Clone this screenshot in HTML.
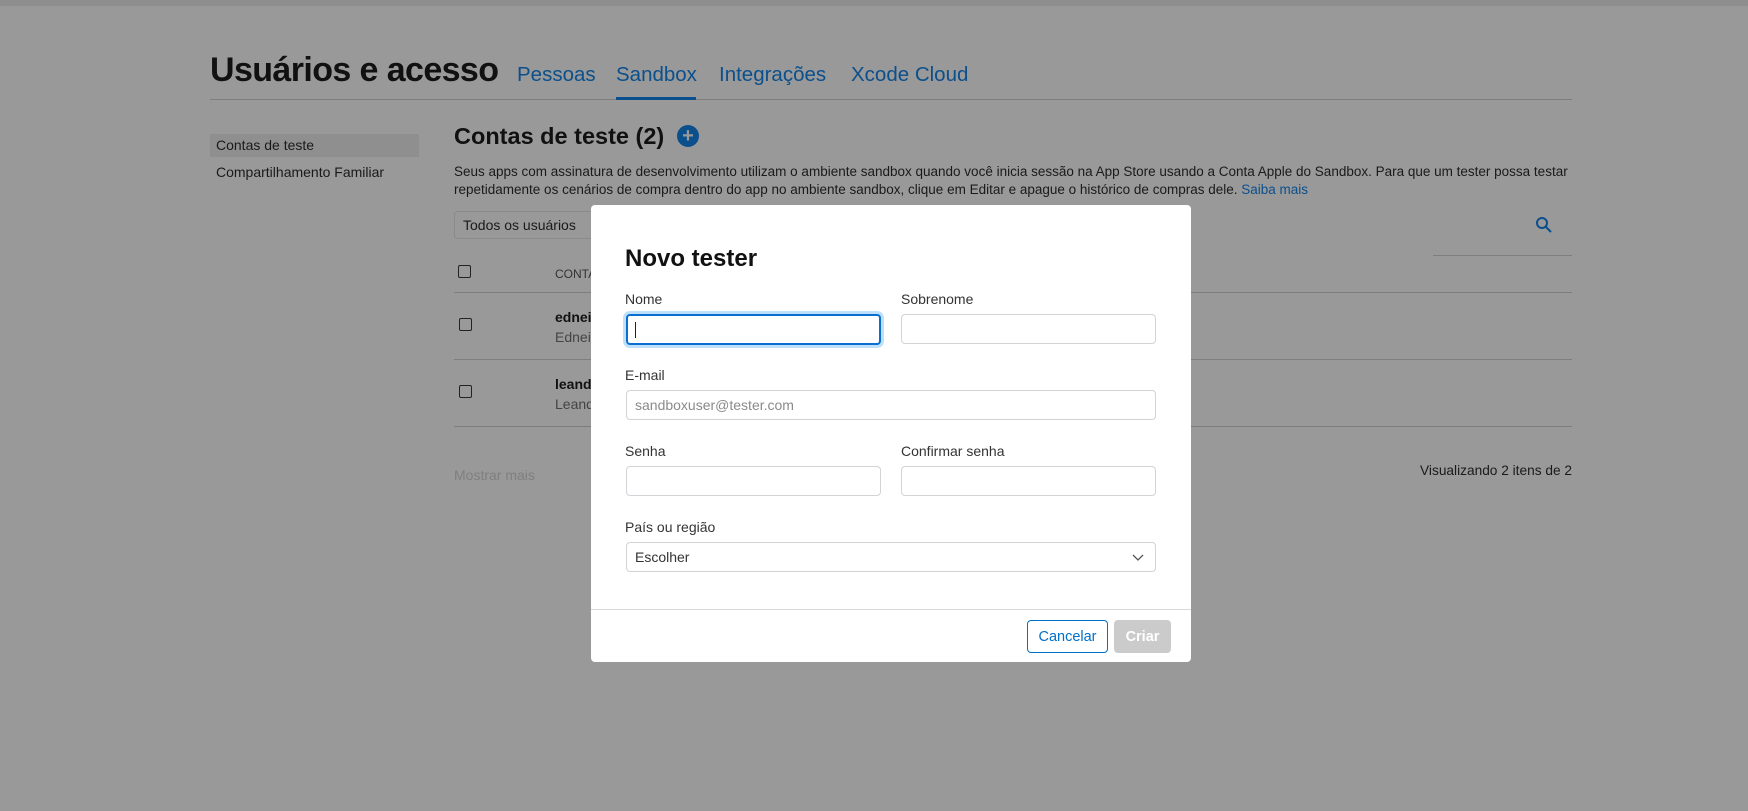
<!DOCTYPE html>
<html><head><meta charset="utf-8"><style>
*{margin:0;padding:0;box-sizing:border-box}
body{width:1748px;height:811px;background:#999;font-family:"Liberation Sans",sans-serif;position:relative;overflow:hidden;color:#111}
.a{position:absolute;white-space:nowrap}
.blue{color:#0b4f8c}
.lbl{font-size:14px;color:#333}
.inp{position:absolute;background:#fff;border:1px solid #d2d2d7;border-radius:4px}
</style></head><body>
<div class="a" style="left:0;top:0;width:1748px;height:6px;background:#8e8e8e"></div>
<div class="a" style="left:210px;top:51px;font-size:34px;font-weight:bold;letter-spacing:-0.6px">Usuários e acesso</div>
<div class="a blue" style="left:517px;top:63px;font-size:20.5px">Pessoas</div>
<div class="a blue" style="left:616px;top:63px;font-size:20.5px">Sandbox</div>
<div class="a blue" style="left:719px;top:63px;font-size:20.5px">Integrações</div>
<div class="a blue" style="left:851px;top:63px;font-size:20.5px">Xcode Cloud</div>
<div class="a" style="left:210px;top:99px;width:1362px;height:1px;background:#7e7e7e"></div>
<div class="a" style="left:616px;top:97px;width:80px;height:3px;background:#0b4f8c"></div>

<div class="a" style="left:210px;top:134px;width:209px;height:23px;background:#8f8f8f"></div>
<div class="a" style="left:216px;top:137px;font-size:14px;color:#1a1a1a">Contas de teste</div>
<div class="a" style="left:216px;top:164px;font-size:14px;color:#1a1a1a">Compartilhamento Familiar</div>

<div class="a" style="left:454px;top:123px;font-size:23.5px;font-weight:bold">Contas de teste (2)</div>
<div class="a" style="left:677px;top:125px;width:22px;height:22px;border-radius:50%;background:#0b4f8c;color:#999;font-size:20px;font-weight:bold;line-height:22px;text-align:center">+</div>
<div class="a" style="left:454px;top:163px;font-size:13.5px;line-height:18px;color:#1a1a1a">Seus apps com assinatura de desenvolvimento utilizam o ambiente sandbox quando você inicia sessão na App Store usando a Conta Apple do Sandbox. Para que um tester possa testar<br>repetidamente os cenários de compra dentro do app no ambiente sandbox, clique em Editar e apague o histórico de compras dele. <span class="blue">Saiba mais</span></div>
<div class="a" style="left:454px;top:211px;width:150px;height:28px;border:1px solid #8a8a8a;border-radius:4px"></div>
<div class="a" style="left:463px;top:217px;font-size:14px;color:#1a1a1a">Todos os usuários</div>
<svg class="a" style="left:1535px;top:216px" width="18" height="18" viewBox="0 0 18 18"><circle cx="7" cy="7" r="5" fill="none" stroke="#0b4f8c" stroke-width="2"/><path d="M11 11l5 5" stroke="#0b4f8c" stroke-width="2"/></svg>
<div class="a" style="left:1433px;top:255px;width:139px;height:1px;background:#7e7e7e"></div>
<div class="a" style="left:458px;top:265px;width:13px;height:13px;border:1px solid #222;border-radius:2px"></div>
<div class="a" style="left:555px;top:267px;font-size:12px;color:#333">CONTA</div>
<div class="a" style="left:454px;top:292px;width:1118px;height:1px;background:#7e7e7e"></div>
<div class="a" style="left:459px;top:318px;width:13px;height:13px;border:1px solid #222;border-radius:2px"></div>
<div class="a" style="left:555px;top:309px;font-size:14px;font-weight:bold">ednei</div>
<div class="a" style="left:555px;top:329px;font-size:14px;color:#444">Ednei</div>
<div class="a" style="left:454px;top:359px;width:1118px;height:1px;background:#7e7e7e"></div>
<div class="a" style="left:459px;top:385px;width:13px;height:13px;border:1px solid #222;border-radius:2px"></div>
<div class="a" style="left:555px;top:376px;font-size:14px;font-weight:bold">leandro</div>
<div class="a" style="left:555px;top:396px;font-size:14px;color:#444">Leandro</div>
<div class="a" style="left:454px;top:426px;width:1118px;height:1px;background:#7e7e7e"></div>
<div class="a" style="left:454px;top:467px;font-size:14px;color:#7f7f7f">Mostrar mais</div>
<div class="a" style="left:1420px;top:463px;width:152px;text-align:right;font-size:13.7px;color:#1a1a1a">Visualizando 2 itens de 2</div>

<div class="a" style="left:591px;top:205px;width:600px;height:457px;background:#fff;border-radius:4px">
 <div class="a" style="left:34px;top:40px;font-size:24px;font-weight:bold;color:#111">Novo tester</div>
 <div class="a lbl" style="left:34px;top:86px">Nome</div>
 <div class="a lbl" style="left:310px;top:86px">Sobrenome</div>
 <div class="inp" style="left:35px;top:109px;width:255px;height:31px;border:2px solid #0a6fd0;box-shadow:0 0 0 3px #bfe0fb"></div>
 <div class="a" style="left:44px;top:117px;width:1px;height:16px;background:#222"></div>
 <div class="inp" style="left:310px;top:109px;width:255px;height:30px"></div>
 <div class="a lbl" style="left:34px;top:162px">E-mail</div>
 <div class="inp" style="left:35px;top:185px;width:530px;height:30px"></div>
 <div class="a" style="left:44px;top:192px;font-size:14px;color:#8a8a8a">sandboxuser@tester.com</div>
 <div class="a lbl" style="left:34px;top:238px">Senha</div>
 <div class="a lbl" style="left:310px;top:238px">Confirmar senha</div>
 <div class="inp" style="left:35px;top:261px;width:255px;height:30px"></div>
 <div class="inp" style="left:310px;top:261px;width:255px;height:30px"></div>
 <div class="a lbl" style="left:34px;top:314px">País ou região</div>
 <div class="inp" style="left:35px;top:337px;width:530px;height:30px"></div>
 <div class="a" style="left:44px;top:344px;font-size:14px;color:#333">Escolher</div>
 <svg class="a" style="left:541px;top:347px" width="12" height="10" viewBox="0 0 12 10"><path d="M1 3l5 5 5-5" fill="none" stroke="#555" stroke-width="1.3"/></svg>
 <div class="a" style="left:0;top:404px;width:600px;height:1px;background:#d8d8d8"></div>
 <div class="a" style="left:436px;top:415px;width:81px;height:33px;border:1px solid #0070c9;border-radius:4px;color:#0070c9;font-size:14.5px;line-height:33px;text-align:center">Cancelar</div>
 <div class="a" style="left:523px;top:415px;width:57px;height:33px;background:#cbcbcb;border-radius:4px;color:#fff;font-size:14.5px;font-weight:bold;line-height:35px;text-align:center">Criar</div>
</div>
</body></html>
